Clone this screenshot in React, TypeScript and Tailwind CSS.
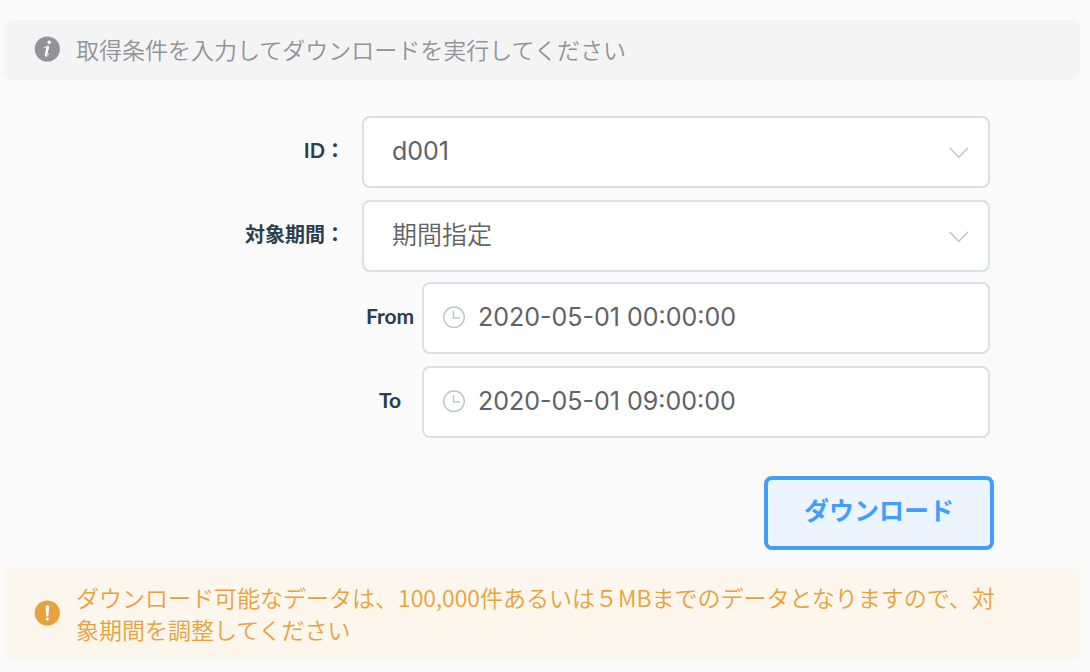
import type { ReactNode } from "react";

function ClockIcon() {
  return (
    <svg viewBox="0 0 24 24" className="h-6 w-6 shrink-0" fill="none" stroke="#c0c4cc" strokeWidth="1.5" aria-hidden="true">
      <circle cx="12" cy="11.2" r="10.3" />
      <path d="M11.5 5.5v6.5H17.5" strokeLinecap="round" strokeLinejoin="round" />
    </svg>
  );
}

function ChevronIcon() {
  return (
    <svg
      viewBox="0 0 20 12"
      className="pointer-events-none absolute top-[31px] right-[21px] h-3 w-5"
      fill="none"
      stroke="#c0c4cc"
      strokeWidth="1.5"
      strokeLinecap="round"
      strokeLinejoin="round"
      aria-hidden="true"
    >
      <path d="M1 1.3l8.8 9 8.8-9" />
    </svg>
  );
}

function InfoIcon() {
  return (
    <svg viewBox="0 0 26 26" className="h-[26px] w-[26px] shrink-0" aria-hidden="true">
      <circle cx="13.3" cy="13" r="12.6" fill="#909399" />
      <circle cx="15.2" cy="6.2" r="1.7" fill="#fff" />
      <path d="M9.8 11.6l4.8-1.6-2.2 8.6c-.3 1.4.6 1.2 2.8-.9" fill="none" stroke="#fff" strokeWidth="1" />
      <path d="M14 10.6l-1.9 7.2c-.3 1.3-.2 2 .6 1.8" fill="none" stroke="#fff" strokeWidth="2.4" />
    </svg>
  );
}

function WarningIcon() {
  return (
    <svg viewBox="0 0 26 26" className="h-[26px] w-[26px] shrink-0" aria-hidden="true">
      <circle cx="13.3" cy="13" r="12.6" fill="#e6a23c" />
      <path d="M11.5 7.1a1.8 1.8 0 0 1 3.6 0l-.7 8.5a1.1 1.1 0 0 1-2.2 0z" fill="#fff" />
      <circle cx="13.3" cy="18.9" r="1.5" fill="#fff" />
    </svg>
  );
}

function Row({ id, label, children }: { id: string; label: string; children: ReactNode }) {
  return (
    <div className="flex items-center">
      <label htmlFor={id} className="w-[358px] shrink-0 pr-[17px] pb-1 text-right text-xl font-bold">
        {label}
      </label>
      <div className="relative flex-1">{children}</div>
    </div>
  );
}

function SelectBox({ id, options }: { id: string; options: string[] }) {
  return (
    <>
      <select
        id={id}
        className="h-[72px] w-full appearance-none rounded-lg border-2 border-[#dcdfe6] bg-white px-7 font-['Inter','Noto_Sans_CJK_JP',sans-serif] text-[25px] font-[350] text-[#606266] data-[latin=true]:font-normal"
        data-latin={options.every((option) => /^[\w-]+$/.test(option))}
      >
        {options.map((option) => (
          <option key={option}>{option}</option>
        ))}
      </select>
      <ChevronIcon />
    </>
  );
}

function DateRow({ id, label, value }: { id: string; label: string; value: string }) {
  return (
    <div className="flex items-center pl-[358px]">
      <label htmlFor={id} className="w-[60px] shrink-0 pr-1 pb-1 text-center text-[21px] leading-7 font-bold">
        {label}
      </label>
      <div className="flex h-[72px] min-w-0 flex-1 items-center gap-3 rounded-lg border-2 border-[#dcdfe6] bg-white px-[18px]">
        <ClockIcon />
        <input
          id={id}
          type="text"
          defaultValue={value}
          className="min-w-0 flex-1 bg-transparent font-['Inter',sans-serif] text-[25px] text-[#606266] outline-none"
        />
      </div>
    </div>
  );
}

export default function App() {
  return (
    <main className="min-h-screen bg-[#fafafa] pt-5 pr-2.5 pb-3 pl-1 font-['Lato','Noto_Sans_CJK_JP',sans-serif] text-[#2c3e50]">
      <div className="flex items-center gap-4 rounded-lg bg-[#f4f4f4] pt-[13px] pr-16 pb-[15px] pl-[30px] font-['Noto_Sans_CJK_JP',sans-serif] text-[23px] leading-8 font-[350] text-[#909399]">
        <InfoIcon />
        <p>取得条件を入力してダウンロードを実行してください</p>
      </div>

      <form className="mt-9 pr-[90px]" onSubmit={(event) => event.preventDefault()}>
        <div className="flex flex-col gap-3">
          <Row id="device" label="ID：">
            <SelectBox id="device" options={["d001"]} />
          </Row>
          <Row id="period" label="対象期間：">
            <SelectBox id="period" options={["期間指定"]} />
          </Row>
        </div>
        <div className="mt-2.5 flex flex-col gap-3">
          <DateRow id="from" label="From" value="2020-05-01 00:00:00" />
          <DateRow id="to" label="To" value="2020-05-01 09:00:00" />
        </div>
        <div className="mt-[38px] -mr-1 flex justify-end">
          <button
            type="submit"
            className="h-[74px] rounded-lg border-4 border-[#409eff] bg-[#ecf5ff] px-9 pb-1 text-[25px] font-bold text-[#409eff]"
          >
            ダウンロード
          </button>
        </div>
      </form>

      <div className="mt-[18px] flex items-center gap-4 rounded-lg bg-[#fdf6ec] pt-[13px] pr-16 pb-[15px] pl-[30px] font-['Noto_Sans_CJK_JP',sans-serif] text-[23px] leading-8 font-[350] text-[#e6a23c]">
        <WarningIcon />
        <p>ダウンロード可能なデータは、100,000件あるいは５MBまでのデータとなりますので、対象期間を調整してください</p>
      </div>
    </main>
  );
}
